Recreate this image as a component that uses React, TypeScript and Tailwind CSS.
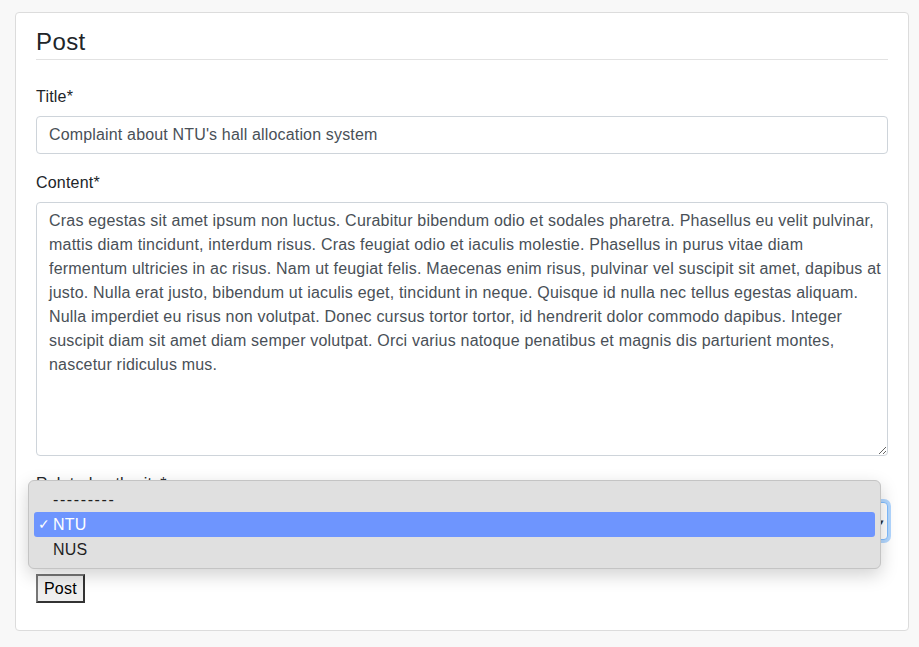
import React from "react";

const content = `Cras egestas sit amet ipsum non luctus. Curabitur bibendum odio et sodales pharetra. Phasellus eu velit pulvinar,
mattis diam tincidunt, interdum risus. Cras feugiat odio et iaculis molestie. Phasellus in purus vitae diam
fermentum ultricies in ac risus. Nam ut feugiat felis. Maecenas enim risus, pulvinar vel suscipit sit amet, dapibus at
justo. Nulla erat justo, bibendum ut iaculis eget, tincidunt in neque. Quisque id nulla nec tellus egestas aliquam.
Nulla imperdiet eu risus non volutpat. Donec cursus tortor tortor, id hendrerit dolor commodo dapibus. Integer
suscipit diam sit amet diam semper volutpat. Orci varius natoque penatibus et magnis dis parturient montes,
nascetur ridiculus mus.`;

const options = ["---------", "NTU", "NUS"];

const App = () => {
	return (
		<div className="min-h-screen bg-[#f8f8f8] pt-[12px] pl-[15px] pr-[10px] pb-[17px] font-['Liberation_Sans',Arial,sans-serif] text-[#212529] tracking-[0.2px]">
			<div className="relative bg-white border border-[#dcdcdc] rounded-[4px] px-[20px] pt-[14px] pb-[27px]">
				<h2 className="text-[24px] leading-[29px] tracking-[0.4px] border-b border-[#e2e2e2] pb-[3px]">Post</h2>

				<form className="mt-[25px]" onSubmit={(e) => e.preventDefault()}>
					<label htmlFor="title" className="block text-[16px] leading-[24px] mb-[7px]">
						Title*
					</label>
					<input
						id="title"
						type="text"
						defaultValue="Complaint about NTU's hall allocation system"
						className="block w-full h-[38px] px-[12px] border border-[#ced4da] rounded-[4px] text-[16px] tracking-[0.16px] text-[#495057] outline-none"
					/>

					<label htmlFor="content" className="block text-[16px] leading-[24px] mt-[17px] mb-[7px]">
						Content*
					</label>
					<textarea
						id="content"
						defaultValue={content}
						wrap="off"
						className="block w-full h-[254px] px-[12px] py-[6px] border border-[#ced4da] rounded-[4px] text-[16px] leading-[24px] tracking-[0.2px] text-[#495057] outline-none overflow-hidden"
					/>

					<label htmlFor="authority" className="block text-[16px] leading-[24px] mt-[16px] mb-[6px]">
						Related authority*
					</label>
					<div className="relative h-[38px] border border-[#80bdff] rounded-[4px] shadow-[0_0_0_3px_rgba(0,123,255,0.3)] bg-white">
						<span className="absolute right-[3px] top-[13px] text-[9px] text-[#333]">▾</span>
					</div>

					<button
						type="submit"
						className="mt-[34px] h-[29px] px-[6px] text-[16px] text-black bg-[#efefef] border-2 border-t-[#767676] border-l-[#767676] border-r-[#333] border-b-[#333] border-solid"
					>
						Post
					</button>
				</form>

				<div className="absolute left-[12px] top-[467px] w-[853px] h-[89px] bg-[#e0e0e0] border border-[#c4c4c4] rounded-[6px] shadow-[0_6px_18px_rgba(0,0,0,0.18)] px-[5px] py-[6px] text-[16px]">
					{options.map((opt) => {
						const selected = opt === "NTU";
						return (
							<div
								key={opt}
								className={`relative h-[25px] leading-[25px] pl-[19px] rounded-[3px] ${selected ? "bg-[#6e95fe] text-white" : "text-[#1f1f1f]"} ${opt.startsWith("-") ? "tracking-[1.6px]" : ""}`}
							>
								{selected && <span className="absolute left-[4px] top-0 text-[14px]">✓</span>}
								{opt}
							</div>
						);
					})}
				</div>
			</div>
		</div>
	);
};

export default App;
